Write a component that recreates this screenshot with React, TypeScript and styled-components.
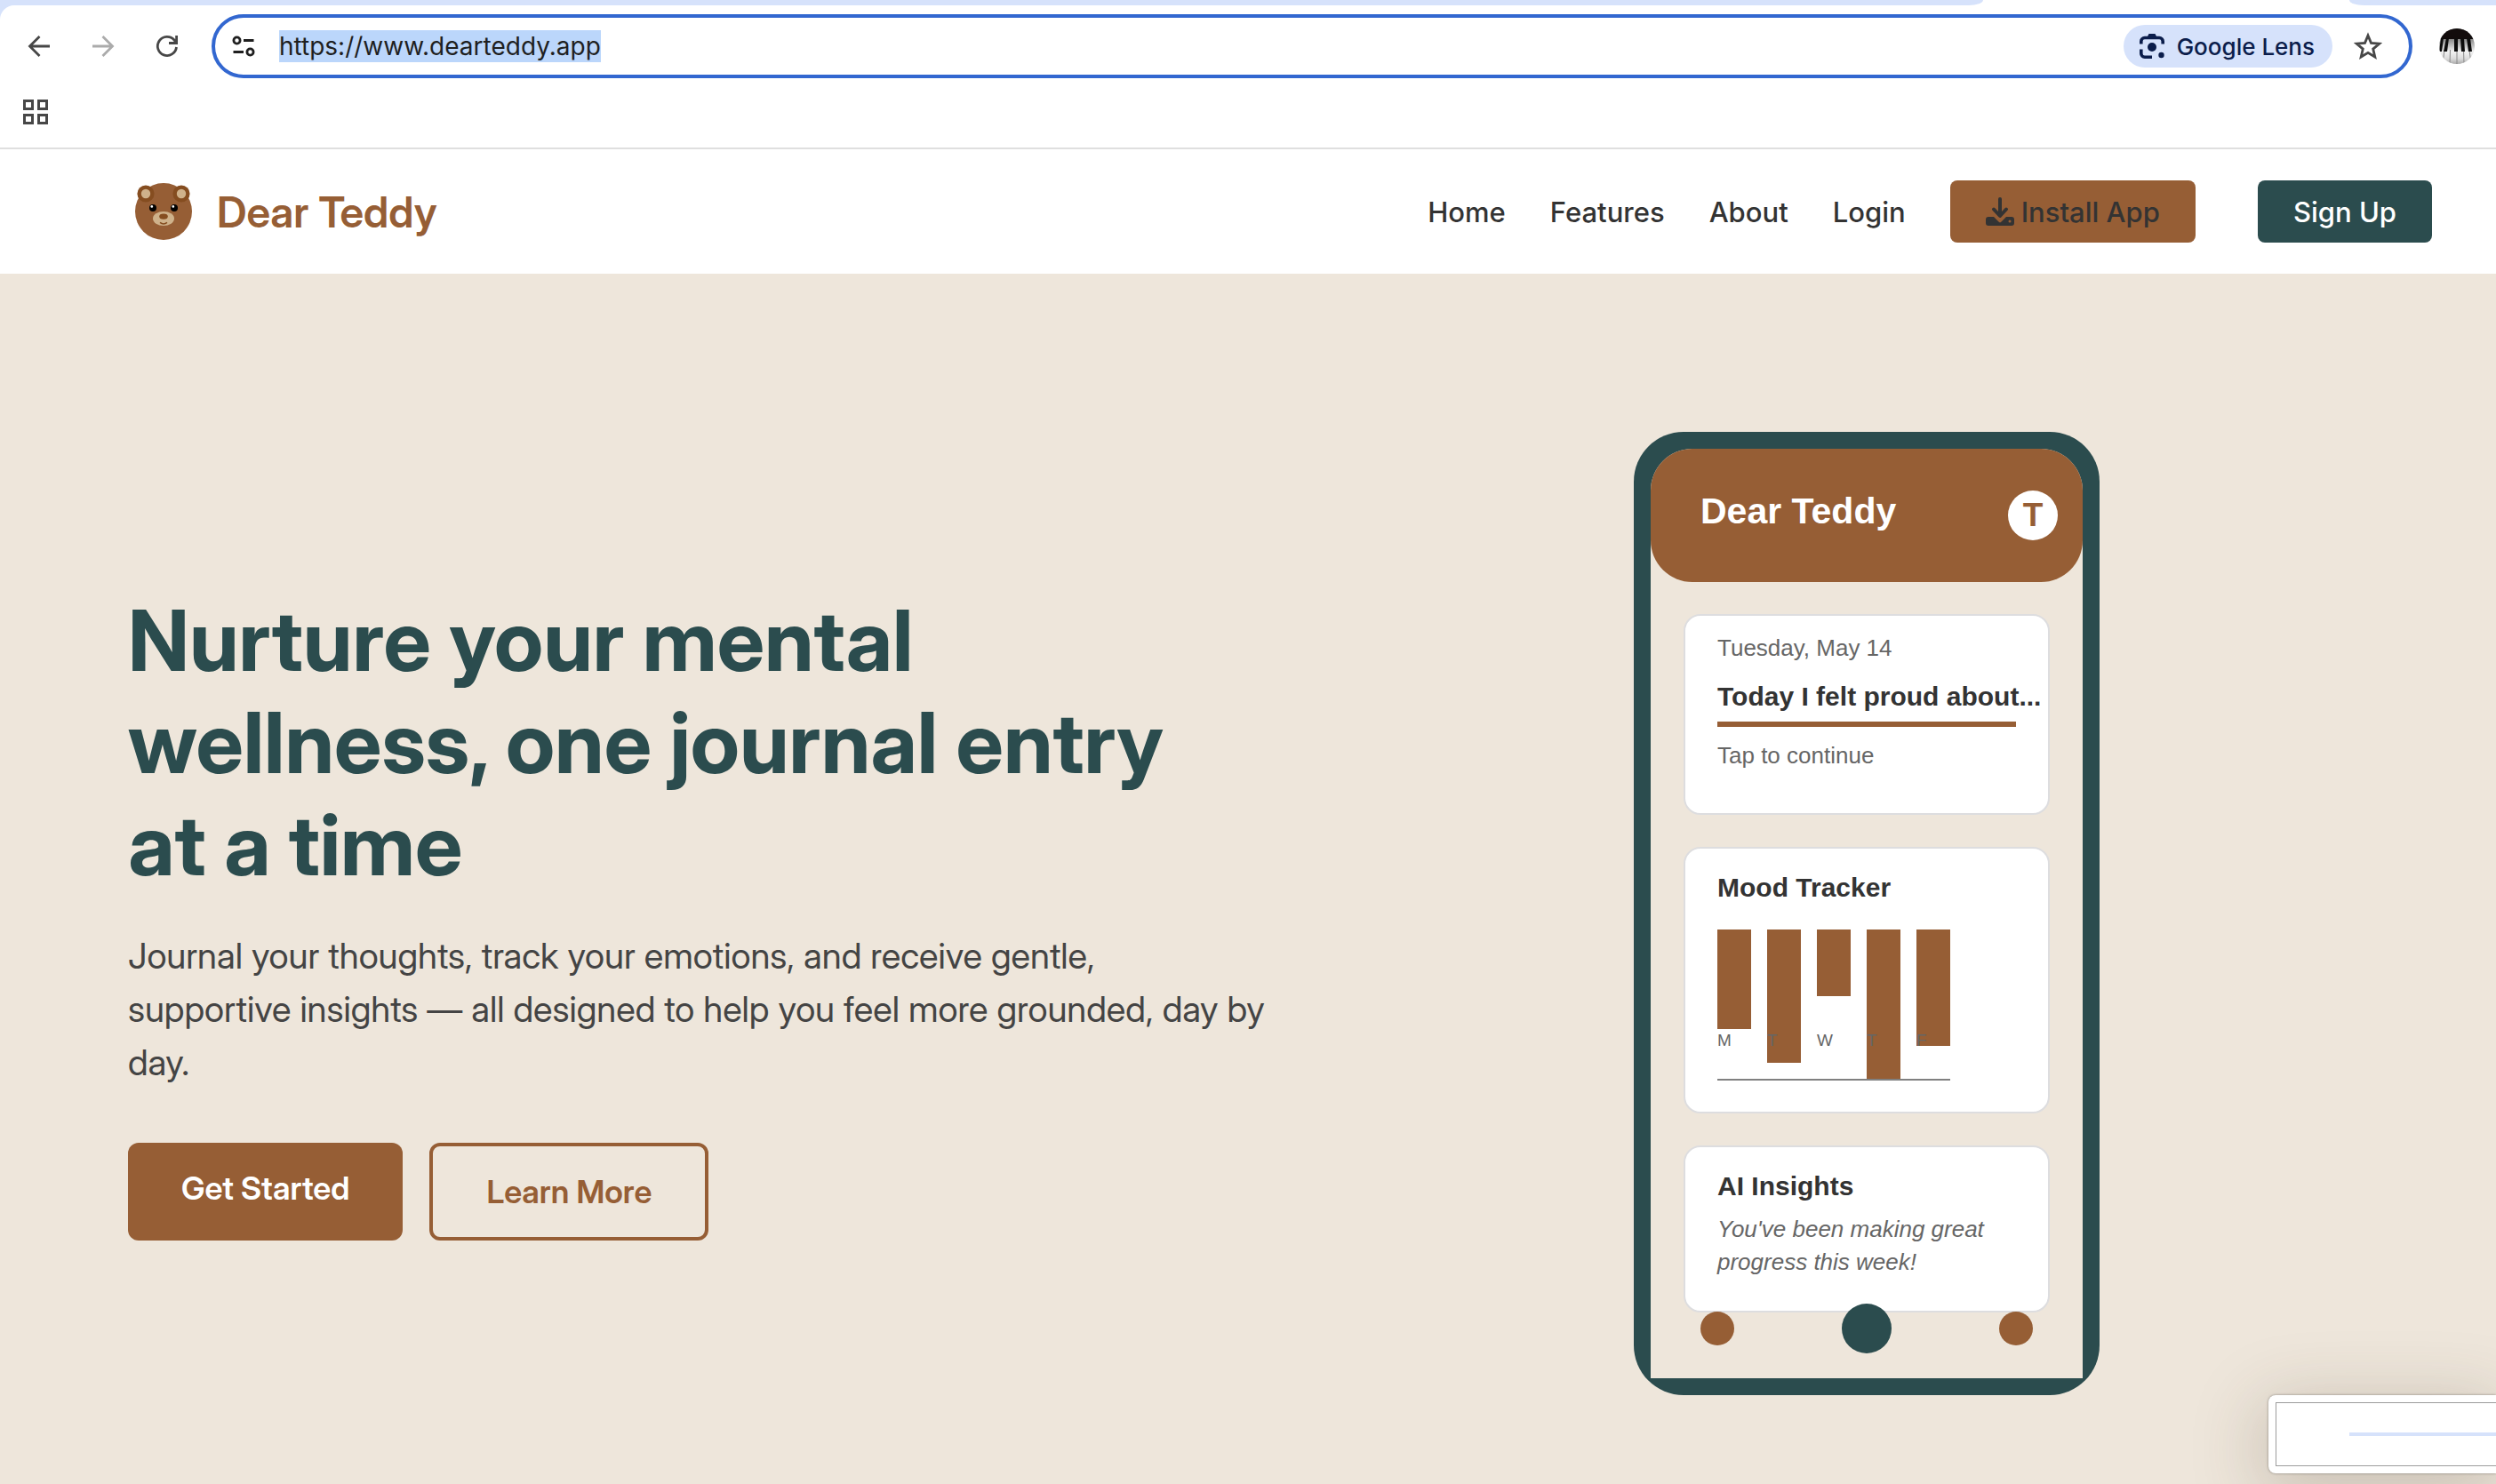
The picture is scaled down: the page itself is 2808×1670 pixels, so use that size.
import React from 'react';
import styled, { createGlobalStyle } from 'styled-components';

const brown = '#965e35';
const teal = '#2b4c4e';
const cream = '#eee6db';
const ink = '#333333';
const ui = "Inter, Roboto, 'Liberation Sans', sans-serif";
const display = "'Inter Display', Roboto, 'Liberation Sans', sans-serif";
const arial = "'Liberation Sans', Arial, sans-serif";

const GlobalStyle = createGlobalStyle`
  *, *::before, *::after { box-sizing: border-box; }
  body { margin: 0; background: ${cream}; font-family: ${ui}; color: ${ink}; }
  h1, h2, h3, p { margin: 0; padding: 0; }
  svg { display: block; }
`;

const Page = styled.div`
  min-height: 100vh;
  display: flex;
  flex-direction: column;
  overflow: hidden;
`;

const PlainButton = styled.button`
  padding: 0;
  border: 0;
  background: none;
  font-family: inherit;
  cursor: pointer;
`;

/* Browser chrome */
const Chrome = styled.header`
  background: #ffffff;
  border-bottom: 2px solid #dfdfdf;
`;
const TabStrip = styled.div`
  display: flex;
  height: 6px;
  background: #ffffff;
`;
const TabsLeft = styled.div`
  flex: 1;
  background: #d6e2fb;
  border-bottom-right-radius: 16px 6px;
`;
const ActiveTab = styled.div`
  width: 412px;
`;
const TabsRight = styled.div`
  width: 165px;
  background: #d6e2fb;
  border-bottom-left-radius: 16px 6px;
`;
const ToolbarBack = styled.div`
  background: linear-gradient(90deg, #d6e2fb 40px, #ffffff 40px);
`;
const Toolbar = styled.div`
  display: flex;
  align-items: center;
  padding: 10px 24px 10px 28px;
  background: #ffffff;
  border-top-left-radius: 16px;
`;
const IconButton = styled(PlainButton)<{ $muted?: boolean }>`
  width: 32px;
  height: 32px;
  margin-right: 40px;
  color: ${(p) => (p.$muted ? '#ababab' : '#474747')};
`;
const Omnibox = styled.div`
  flex: 1;
  display: flex;
  align-items: center;
  height: 72px;
  margin-left: -6px;
  margin-right: 30px;
  padding: 0 30px 0 16px;
  border: 4px solid #3267d0;
  border-radius: 36px;
`;
const SiteInfo = styled(PlainButton)`
  width: 32px;
  height: 32px;
  color: #1f1f1f;
`;
const UrlField = styled.div`
  flex: 1;
  display: flex;
  padding-left: 24px;
`;
const Url = styled.span`
  height: 36px;
  background: #bbd6fb;
  color: #1f1f1f;
  font-size: 28px;
  line-height: 36px;
`;
const Lens = styled(PlainButton)`
  display: flex;
  align-items: center;
  gap: 12px;
  height: 48px;
  padding: 0 20px 0 16px;
  margin-right: 24px;
  border-radius: 24px;
  background: #d6e2fb;
  color: #0b1d4b;
  font-size: 26px;
  font-weight: 500;
`;
const Star = styled(PlainButton)`
  width: 32px;
  height: 32px;
  color: #474747;
`;
const Bookmarks = styled.div`
  display: flex;
  align-items: flex-start;
  height: 68px;
  padding: 14px 26px;
  color: #474747;
`;

/* Site header */
const SiteHeader = styled.header`
  display: flex;
  align-items: center;
  justify-content: space-between;
  height: 140px;
  padding: 0 72px 0 144px;
  background: #ffffff;
`;
const Brand = styled.a`
  display: flex;
  align-items: center;
  gap: 20px;
  color: ${brown};
  font-family: ${display};
  font-size: 48px;
  font-weight: 600;
  text-decoration: none;
`;
const Nav = styled.nav`
  display: flex;
  align-items: center;
  gap: 50px;
  font-size: 31px;
  font-weight: 500;
`;
const NavLink = styled.a`
  color: ${ink};
  text-decoration: none;
`;
const NavButton = styled(PlainButton)<{ $primary?: boolean }>`
  display: flex;
  align-items: center;
  gap: 8px;
  height: 70px;
  padding: 0 40px;
  margin-left: ${(p) => (p.$primary ? '20px' : '0')};
  border-radius: 8px;
  background: ${(p) => (p.$primary ? teal : brown)};
  color: ${(p) => (p.$primary ? '#ffffff' : ink)};
  font-size: 31px;
  font-weight: 500;
`;

/* Hero */
const Hero = styled.main`
  flex: 1;
  display: grid;
  grid-template-columns: 1fr 1fr;
  gap: 48px;
  align-items: center;
  padding: 178px 72px 100px 144px;
`;
const Copy = styled.section`
  display: flex;
  flex-direction: column;
  align-items: flex-start;
  padding-top: 3px;
`;
const Title = styled.h1`
  padding-right: 32px;
  color: ${teal};
  font-family: ${display};
  font-size: 95px;
  font-weight: 700;
  line-height: 115px;
`;
const Lead = styled.p`
  margin-top: 38px;
  margin-right: -16px;
  color: #444444;
  font-family: ${display};
  font-size: 40px;
  line-height: 60px;
`;
const Actions = styled.div`
  display: flex;
  gap: 30px;
  margin-top: 60px;
`;
const Action = styled.a<{ $outline?: boolean }>`
  height: 110px;
  padding: 24px 60px;
  border: ${(p) => (p.$outline ? `4px solid ${brown}` : '0')};
  border-radius: 12px;
  background: ${(p) => (p.$outline ? 'transparent' : brown)};
  color: ${(p) => (p.$outline ? brown : '#ffffff')};
  font-family: ${display};
  font-size: 36px;
  font-weight: 600;
  line-height: 54px;
  text-decoration: none;
`;

/* Phone preview */
const Phone = styled.section`
  justify-self: center;
  width: 524px;
  padding: 19px;
  border-radius: 56px;
  background: ${teal};
  font-family: ${arial};
`;
const Screen = styled.div`
  padding-bottom: 28px;
  border-radius: 47px 47px 0 0;
  background: ${cream};
`;
const AppBar = styled.div`
  display: flex;
  align-items: center;
  justify-content: space-between;
  height: 150px;
  padding: 0 28px 0 56px;
  border-radius: 47px;
  background: ${brown};
  color: #ffffff;
`;
const AppName = styled.h2`
  padding-bottom: 10px;
  font-size: 41px;
  line-height: 48px;
`;
const Initial = styled.span`
  width: 56px;
  height: 56px;
  border-radius: 50%;
  background: #ffffff;
  color: ${brown};
  font-size: 37px;
  font-weight: 700;
  line-height: 56px;
  text-align: center;
`;
const Cards = styled.div`
  display: flex;
  flex-direction: column;
  gap: 36px;
  padding: 36px 37px 0;
`;
const Card = styled.article<{ $top: number; $bottom: number }>`
  padding: ${(p) => p.$top}px 0 ${(p) => p.$bottom}px 36px;
  border: 2px solid #dddddf;
  border-radius: 19px;
  background: #ffffff;
`;
const Note = styled.p<{ $italic?: boolean }>`
  color: #666666;
  font-size: 26px;
  font-style: ${(p) => (p.$italic ? 'italic' : 'normal')};
  line-height: 37px;
`;
const CardTitle = styled.h3`
  font-size: 30px;
  line-height: 36px;
  white-space: nowrap;

  ${Note} + & { margin-top: 18px; }
  & + ${Note} { margin-top: 12px; }
`;
const Rule = styled.div`
  width: 336px;
  height: 6px;
  margin: 10px 0 14px;
  background: ${brown};
`;
const Chart = styled.div`
  display: flex;
  gap: 18px;
  width: 262px;
  height: 170px;
  margin-top: 29px;
  border-bottom: 2px solid #808080;
`;
const Day = styled.div`
  position: relative;
  width: 38px;
`;
const Bar = styled.div`
  background: ${brown};
`;
const DayLabel = styled.span`
  position: absolute;
  left: 0;
  top: 114px;
  color: #666666;
  font-size: 19px;
  line-height: 22px;
`;
const Dock = styled.div`
  position: relative;
  display: flex;
  align-items: center;
  justify-content: space-between;
  margin-top: -10px;
  padding: 0 56px;
`;
const Dot = styled(PlainButton)<{ $main?: boolean }>`
  width: ${(p) => (p.$main ? 56 : 38)}px;
  height: ${(p) => (p.$main ? 56 : 38)}px;
  border-radius: 50%;
  background: ${(p) => (p.$main ? teal : brown)};
`;

/* Floating window preview */
const Preview = styled.aside`
  position: fixed;
  right: 0;
  bottom: 12px;
  width: 256px;
  padding: 8px 0 8px 8px;
  border-radius: 8px 0 0 8px;
  background: #ffffff;
  box-shadow: 0 0 3px rgba(0, 0, 0, 0.4), 0 16px 80px 8px rgba(70, 55, 35, 0.22);
`;
const PreviewPage = styled.div`
  height: 72px;
  padding: 33px 0 0 82px;
  border: 1px solid #9c9c9c;
  border-right: 0;
`;
const PreviewLine = styled.div`
  height: 4px;
  background: #d6e2fb;
`;

const Bear = () => (
  <svg width="80" height="80" viewBox="0 0 100 100" aria-hidden="true">
    <circle cx="50" cy="50" r="40" fill={brown} />
    <circle cx="25" cy="25" r="12" fill="#854d20" />
    <circle cx="75" cy="25" r="12" fill="#854d20" />
    <circle cx="25" cy="25" r="6.5" fill="#cfb28b" />
    <circle cx="75" cy="25" r="6.5" fill="#cfb28b" />
    <circle cx="35" cy="45" r="5" fill="#000" />
    <circle cx="65" cy="45" r="5" fill="#000" />
    <circle cx="33.5" cy="43" r="1.7" fill="#fff" />
    <circle cx="63.5" cy="43" r="1.7" fill="#fff" />
    <ellipse cx="50" cy="60" rx="15" ry="10" fill="#cfb28b" />
    <ellipse cx="50" cy="57" rx="6" ry="4" fill="#854d20" />
    <path d="M45 65.500Q50 69.500 55 65.500" fill="none" stroke="#854d20" strokeWidth="2" />
  </svg>
);

const Avatar = () => (
  <svg width="40" height="40" viewBox="0 0 40 40" role="img" aria-label="Profile">
    <defs>
      <clipPath id="round"><circle cx="20" cy="20" r="20" /></clipPath>
      <linearGradient id="keys" x1="0" y1="0" x2="0" y2="1">
        <stop offset="0.3" stopColor="#8a8a8a" />
        <stop offset="0.65" stopColor="#f2f2f2" />
        <stop offset="0.85" stopColor="#dcdcdc" />
        <stop offset="1" stopColor="#aaaaaa" />
      </linearGradient>
    </defs>
    <g clipPath="url(#round)">
      <rect width="40" height="40" fill="url(#keys)" />
      <path d="M12.500 24L12 40M20 24V40M27.500 24L28 40M6 24L4 40M34 24L36 40" stroke="#888" strokeWidth="1" />
      <rect width="40" height="12" fill="#120c0c" />
      <path d="M2 11h3l-2 15H0zM8 11h3l-2 15H5zM17 11h4v15h-4zM24 11h4l1 15h-4zM31 11h4l2 15h-4z" fill="#0c0c0c" />
    </g>
  </svg>
);

const days = [
  { name: 'M', value: 112 },
  { name: 'T', value: 150 },
  { name: 'W', value: 75 },
  { name: 'T', value: 168 },
  { name: 'F', value: 131 },
];

export default function App() {
  return (
    <Page>
      <GlobalStyle />
      <Chrome>
        <TabStrip><TabsLeft /><ActiveTab /><TabsRight /></TabStrip>
        <ToolbarBack>
          <Toolbar>
            <IconButton aria-label="Back">
              <svg width="32" height="32" viewBox="0 0 32 32" fill="none" stroke="currentColor" strokeWidth="2.800"><path d="M28 16H6M16.500 5L5.500 16l11 11" /></svg>
            </IconButton>
            <IconButton $muted aria-label="Forward">
              <svg width="32" height="32" viewBox="0 0 32 32" fill="none" stroke="currentColor" strokeWidth="2.800"><path d="M4 16h22M15.500 5l11 11-11 11" /></svg>
            </IconButton>
            <IconButton aria-label="Reload">
              <svg width="32" height="32" viewBox="0 0 32 32" fill="none" stroke="currentColor" strokeWidth="2.800"><path d="M26.500 17A10.600 10.600 0 1 1 24 9l2 3M26.600 4v8.500H18" /></svg>
            </IconButton>
            <Omnibox>
              <SiteInfo aria-label="View site information">
                <svg width="32" height="32" viewBox="0 0 32 32" fill="none" stroke="currentColor" strokeWidth="2.800"><circle cx="8.500" cy="9.500" r="3.600" /><circle cx="23.500" cy="22.500" r="3.600" /><path d="M16 9.500h11.500M4.500 22.500H16" /></svg>
              </SiteInfo>
              <UrlField><Url>https://www.dearteddy.app</Url></UrlField>
              <Lens>
                <svg width="32" height="32" viewBox="0 0 32 32" fill="none" stroke="currentColor" strokeWidth="3.600"><path d="M3.800 13.500v-3a4 4 0 0 1 4-4h16.400a4 4 0 0 1 4 4v3M3.800 19.500v4.700a4 4 0 0 0 4 4H16" /><path d="M10.500 6l2-4h7l2 4z" fill="currentColor" stroke="none" /><circle cx="16" cy="17" r="5" fill="currentColor" stroke="none" /><circle cx="26.500" cy="26" r="3.200" fill="currentColor" stroke="none" /></svg>
                Google Lens
              </Lens>
              <Star aria-label="Bookmark this page">
                <svg width="32" height="32" viewBox="0 0 32 32" fill="none" stroke="currentColor" strokeWidth="2.800"><path d="M16 4l3.500 8.400 9.100.8-6.900 5.900 2.100 8.900-7.800-4.700L8.200 28l2.100-8.900-6.900-5.900 9.100-.8z" /></svg>
              </Star>
            </Omnibox>
            <Avatar />
          </Toolbar>
        </ToolbarBack>
        <Bookmarks>
          <svg width="28" height="28" viewBox="0 0 28 28" fill="none" stroke="currentColor" strokeWidth="3"><path d="M1.500 1.500h9v9h-9zM17.500 1.500h9v9h-9zM1.500 17.500h9v9h-9zM17.500 17.500h9v9h-9z" /></svg>
        </Bookmarks>
      </Chrome>

      <SiteHeader>
        <Brand href="#home"><Bear />Dear Teddy</Brand>
        <Nav>
          <NavLink href="#home">Home</NavLink>
          <NavLink href="#features">Features</NavLink>
          <NavLink href="#about">About</NavLink>
          <NavLink href="#login">Login</NavLink>
          <NavButton>
            <svg width="32" height="32" viewBox="0 0 32 32" aria-hidden="true"><path d="M16 2v18M9 13.500l7 7.500 7-7.500" fill="none" stroke="currentColor" strokeWidth="4" strokeLinecap="round" strokeLinejoin="round" /><path fillRule="evenodd" d="M3 22h6l5.500 5.500a2 2 0 0 0 3 0L23 22h6a3 3 0 0 1 3 3v4a3 3 0 0 1-3 3H3a3 3 0 0 1-3-3v-4a3 3 0 0 1 3-3zM27 25.500a1.500 1.500 0 1 0 0 3 1.500 1.500 0 0 0 0-3z" fill="currentColor" /></svg>
            Install App
          </NavButton>
          <NavButton $primary>Sign Up</NavButton>
        </Nav>
      </SiteHeader>

      <Hero>
        <Copy>
          <Title>Nurture your mental wellness, one journal entry at a time</Title>
          <Lead>
            Journal your thoughts, track your emotions, and receive gentle,
            <br />
            supportive insights — all designed to help you feel more grounded, day by day.
          </Lead>
          <Actions>
            <Action href="#start">Get Started</Action>
            <Action href="#more" $outline>Learn More</Action>
          </Actions>
        </Copy>
        <Phone>
          <Screen>
            <AppBar><AppName>Dear Teddy</AppName><Initial>T</Initial></AppBar>
            <Cards>
              <Card $top={18} $bottom={46}>
                <Note>Tuesday, May 14</Note>
                <CardTitle>Today I felt proud about...</CardTitle>
                <Rule />
                <Note>Tap to continue</Note>
              </Card>
              <Card $top={26} $bottom={35}>
                <CardTitle>Mood Tracker</CardTitle>
                <Chart>
                  {days.map((d, i) => (
                    <Day key={i}><Bar style={{ height: d.value }} /><DayLabel>{d.name}</DayLabel></Day>
                  ))}
                </Chart>
              </Card>
              <Card $top={26} $bottom={36}>
                <CardTitle>AI Insights</CardTitle>
                <Note $italic>You've been making great<br />progress this week!</Note>
              </Card>
            </Cards>
            <Dock><Dot aria-label="Entries" /><Dot $main aria-label="New entry" /><Dot aria-label="Settings" /></Dock>
          </Screen>
        </Phone>
      </Hero>

      <Preview><PreviewPage><PreviewLine /></PreviewPage></Preview>
    </Page>
  );
}
